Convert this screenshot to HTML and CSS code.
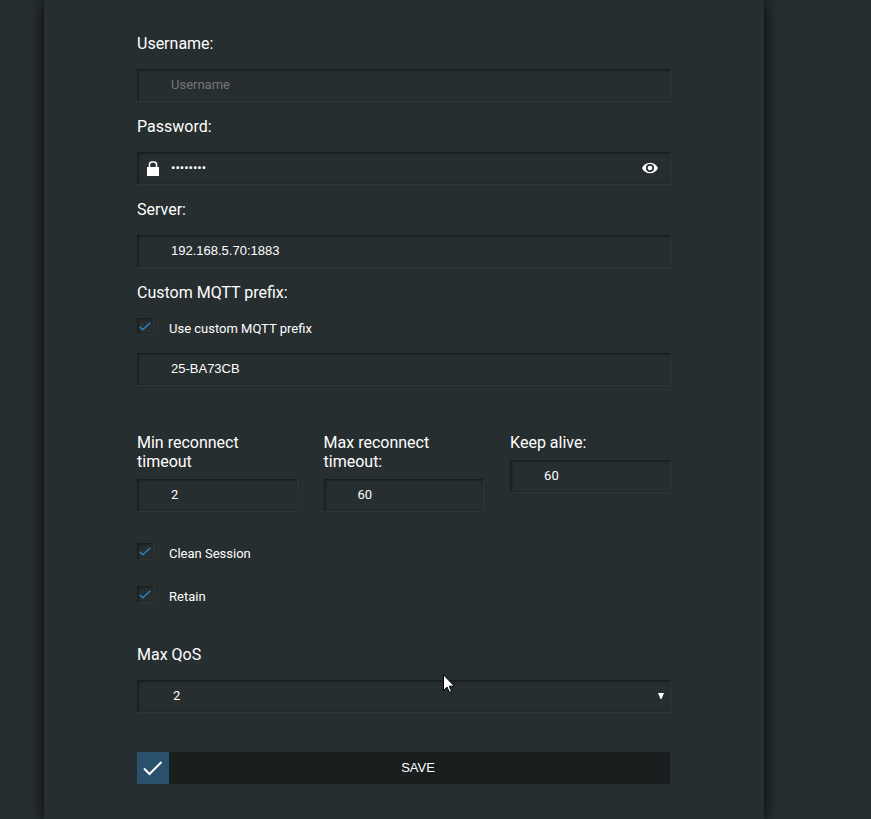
FILE: index.html
```html
<!DOCTYPE html>
<html lang="en">
<head>
<meta charset="utf-8">
<meta name="viewport" content="width=device-width, initial-scale=1">
<title>MQTT settings</title>
<link rel="stylesheet" href="styles.css">
</head>
<body>
<main class="panel">
  <form class="form">
    <div class="field">
      <label class="label" for="username">Username:</label>
      <input class="input" id="username" type="text" placeholder="Username">
    </div>
    <div class="field">
      <label class="label" for="password">Password:</label>
      <div class="input-wrap">
        <svg class="icon-lock" viewBox="0 0 12 15" aria-hidden="true"><path d="M2.500 7V3.500Q2.500 1 5 1h2q2.500 0 2.500 2.500V7" fill="none" stroke="#fff" stroke-width="1.5"/><path d="M0 6h12v9H0z" fill="#fff"/></svg>
        <input class="input" id="password" type="password" value="password">
        <button class="reveal" type="button" aria-label="Show password">
          <svg viewBox="0 0 24 24" aria-hidden="true"><path fill="#fff" d="M12 4C6.500 4 2 7.200 0 12c2 4.800 6.500 8 12 8s10-3.200 12-8c-2-4.800-6.500-8-12-8zm0 14a6 6 0 1 1 0-12 6 6 0 0 1 0 12zm0-9.500a3.500 3.500 0 1 0 0 7 3.500 3.500 0 0 0 0-7z"/></svg>
        </button>
      </div>
    </div>
    <div class="field">
      <label class="label" for="server">Server:</label>
      <input class="input input-system" id="server" type="text" value="192.168.5.70:1883">
    </div>
    <div class="field">
      <label class="label" for="prefix">Custom MQTT prefix:</label>
      <label class="check"><input class="box" type="checkbox" checked><svg class="tick" viewBox="0 0 12 9" aria-hidden="true"><path d="M0.700 4.700 3.800 7.800 11.300 0.700"/></svg>Use custom MQTT prefix</label>
      <input class="input input-system" id="prefix" type="text" value="25-BA73CB">
    </div>
    <div class="columns">
      <div class="column">
        <label class="label" for="min">Min reconnect timeout</label>
        <input class="input" id="min" type="text" value="2">
      </div>
      <div class="column">
        <label class="label" for="max">Max reconnect timeout:</label>
        <input class="input" id="max" type="text" value="60">
      </div>
      <div class="column">
        <label class="label" for="keep">Keep alive:</label>
        <input class="input" id="keep" type="text" value="60">
      </div>
    </div>
    <div class="checks">
      <label class="check"><input class="box" type="checkbox" checked><svg class="tick" viewBox="0 0 12 9" aria-hidden="true"><path d="M0.700 4.700 3.800 7.800 11.300 0.700"/></svg>Clean Session</label>
      <label class="check"><input class="box" type="checkbox" checked><svg class="tick" viewBox="0 0 12 9" aria-hidden="true"><path d="M0.700 4.700 3.800 7.800 11.300 0.700"/></svg>Retain</label>
    </div>
    <div class="field field-qos">
      <label class="label" for="qos">Max QoS</label>
      <div class="input-wrap">
        <select class="input select" id="qos"><option>0</option><option>1</option><option selected>2</option></select>
        <svg class="arrow" viewBox="0 0 6 6" aria-hidden="true"><path d="M0 0h6L3.500 6h-1z" fill="#fff"/></svg>
        <svg class="pointer" viewBox="0 0 12 19" aria-hidden="true"><path d="M0.500 0.800v15.700l3.600-3.400 2.300 5.200 2.200-0.900-2.300-5.200h5.100z" fill="#fff" stroke="#000"/></svg>
      </div>
    </div>
    <button class="save" type="submit">
      <span class="save-icon"><svg viewBox="0 0 20 16" aria-hidden="true"><path d="M1 8.500 6.500 14 18.500 2"/></svg></span>
      <span class="save-text">SAVE</span>
    </button>
  </form>
</main>
</body>
</html>
```
FILE: styles.css
```css
* { box-sizing: border-box; }

body {
  margin: 0;
  background: #272e30;
  color: #fff;
  font-family: Roboto, "Liberation Sans", sans-serif;
  font-size: 16px;
  line-height: 19px;
}

.panel {
  min-height: 100vh;
  margin: 0 107px 0 44px;
  padding: 34px 94px 35px 93px;
  background: #272e30;
  box-shadow: 0 0 14px rgba(0, 0, 0, 0.9);
}

.form,
.field,
.column,
.checks {
  display: flex;
  flex-direction: column;
}

.form,
.field { gap: 16px; }

.input-wrap { position: relative; }

.input {
  display: block;
  width: 100%;
  height: 32px;
  margin: 0;
  padding: 0 34px 2px;
  border: 0;
  border-radius: 0;
  outline: 0;
  background: #272e30;
  color: #fff;
  font: 13px Roboto, "Liberation Sans", sans-serif;
  box-shadow: inset 1px 1px 3px rgba(0, 0, 0, 0.55), 1px 1px 0 #303638;
}

.input-system { font-family: "Liberation Sans", Arial, sans-serif; }

.input::placeholder { color: #757575; opacity: 1; }

.icon-lock {
  position: absolute;
  top: 9px;
  left: 10px;
  width: 12px;
  height: 15px;
}

.reveal {
  position: absolute;
  top: 8px;
  right: 12px;
  width: 16px;
  height: 16px;
  padding: 0;
  border: 0;
  background: none;
}

.reveal svg { display: block; }

.columns {
  display: flex;
  align-items: flex-start;
  justify-content: space-between;
  margin-top: 32px;
}

.column {
  width: 30%;
  gap: 8px;
}

.check {
  position: relative;
  display: flex;
  align-items: flex-start;
  gap: 16px;
  font-size: 13px;
  line-height: 22px;
  height: 19px;
}

.box {
  appearance: none;
  width: 16px;
  height: 16px;
  margin: 0;
  background: #272e30;
  box-shadow: inset 1px 1px 3px rgba(0, 0, 0, 0.55), 1px 1px 0 #303638;
}

.tick {
  position: absolute;
  top: 4px;
  left: 2px;
  width: 12px;
  height: 9px;
  fill: none;
  stroke: #2a82be;
  stroke-width: 1.5;
  display: none;
}

.box:checked + .tick { display: block; }

.checks {
  gap: 24px;
  margin-top: 16px;
}

.field-qos { margin-top: 24px; }

.select {
  appearance: none;
  padding-left: 36px;
}

.arrow {
  position: absolute;
  top: 13px;
  right: 6px;
  width: 6px;
  height: 6px;
}

.pointer {
  position: absolute;
  top: -6px;
  left: 306px;
  width: 12px;
  height: 19px;
}

.save {
  display: flex;
  align-items: center;
  height: 32px;
  margin: 24px 0 0;
  padding: 0;
  border: 0;
  background: #191e1e;
  color: #fff;
  font: 13px "Liberation Sans", Arial, sans-serif;
}

.save-icon {
  display: grid;
  place-items: center;
  width: 32px;
  height: 32px;
  background: #29506d;
}

.save-icon svg {
  width: 20px;
  height: 16px;
  fill: none;
  stroke: #fff;
  stroke-width: 2;
}

.save-text {
  flex: 1;
  padding: 0 3px 2px 0;
  text-align: center;
}
```
